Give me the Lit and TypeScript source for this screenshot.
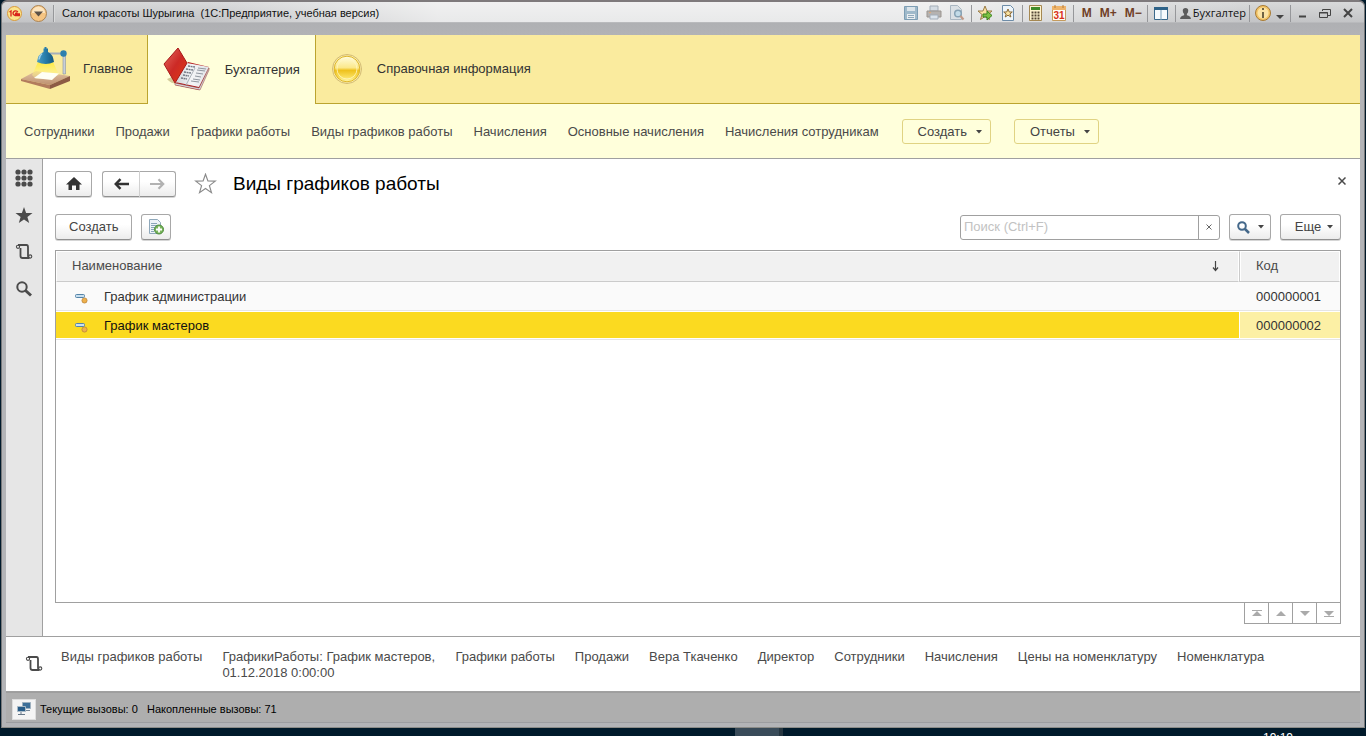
import { LitElement, html, css, svg, nothing } from "lit";
import { customElement, state } from "lit/decorators.js";

const lamp = html`<svg width="50" height="44" viewBox="0 0 50 44" aria-hidden="true">
  <defs>
    <linearGradient id="wood" x1="0" y1="0" x2="0" y2="1"><stop offset="0" stop-color="#e2c3a2"/><stop offset="1" stop-color="#bd9070"/></linearGradient>
    <linearGradient id="shade" x1="0" x2="1"><stop offset="0" stop-color="#4c9cc4"/><stop offset=".45" stop-color="#2a80ad"/><stop offset="1" stop-color="#12577f"/></linearGradient>
    <linearGradient id="beam" x1="0" y1="0" x2="0" y2="1"><stop offset="0" stop-color="#ffea3c"/><stop offset="1" stop-color="#fff6a0" stop-opacity=".3"/></linearGradient>
  </defs>
  <path d="M0 32 15 24 49 29 29 38z" fill="url(#wood)"/>
  <path d="M0 32 29 38v4L0 34z" fill="#b27c5d"/><path d="M29 38 49 29v5L29 42z" fill="#8d5b45"/>
  <path d="M42 9h2.500v18H42z" fill="#c9cfd8" stroke="#8a95a2" stroke-width=".6"/>
  <path d="M17 15h15l6 13-10 4H15l-4-4z" fill="url(#beam)"/>
  <path d="M13 31 21 25l17 1.500L31 33z" fill="#fffff4"/>
  <path d="M27 6.500h14" stroke="#a5afba" stroke-width="2"/>
  <circle cx="42.500" cy="6.500" r="3.200" fill="#2c7fae"/>
  <path d="M22.500 1.500h1V0h2v1.500h1.500V5q5 2 6 10-8 4-17 0 1-8 6.500-10z" fill="url(#shade)"/>
  <path d="M21 6.500q-2.500 2-3 6" stroke="#9fd2ea" stroke-width="1.500" fill="none"/>
</svg>`;

const book = html`<svg width="48" height="46" viewBox="0 0 48 46" aria-hidden="true">
  <defs>
    <linearGradient id="red" x1="0" y1="0" x2="1" y2="1"><stop offset="0" stop-color="#e46a60"/><stop offset=".5" stop-color="#cc2a26"/><stop offset="1" stop-color="#e13a12"/></linearGradient>
    <linearGradient id="paper" x1="0" x2="1"><stop offset="0" stop-color="#cfd3d8"/><stop offset=".5" stop-color="#f4f5f7"/><stop offset="1" stop-color="#dfe2e6"/></linearGradient>
  </defs>
  <path d="M4 32c3 4 7 4 8 5l-3-7z" fill="#b8a86c" opacity=".6"/>
  <path d="M12 38 25 15l21 5-10 23z" fill="#b41c1c"/>
  <path d="M12 35 24 16l22 4-10 20z" fill="url(#paper)"/>
  <path d="M12 36 36 41 46 21v2L37 43l-25-5z" fill="#d8dbe0" stroke="#8d3636" stroke-width=".5"/>
  <path d="m25 19 7 1m-9 2 7 1m-9 2 7 1m-8 2 6 1m-8 2 6 1" stroke="#737a84" stroke-width="1.500" stroke-dasharray="2 .6"/>
  <path d="m35 21 8 1m-9 1 8 1m-9 2 7 1m-8 2 6 1m-8 2 7 1m-9 1 8 1" stroke="#9197a0" stroke-width="1"/>
  <path d="m32 21-9 17" stroke="#aeb3ba"/>
  <path d="M15 1 24 16 12 36 1 17z" fill="url(#red)" stroke="#a81a1a"/>
</svg>`;

const coin = html`<svg width="32" height="32" viewBox="0 0 32 32" aria-hidden="true">
  <defs><linearGradient id="gold" x1="0" y1="0" x2="0" y2="1"><stop offset="0" stop-color="#fffde0"/><stop offset=".45" stop-color="#fbe88a"/><stop offset=".55" stop-color="#eec11c"/><stop offset=".8" stop-color="#f9dd58"/><stop offset="1" stop-color="#fdf6a8"/></linearGradient></defs>
  <circle cx="16" cy="16" r="14.500" fill="#f8eaa4" stroke="#d3bb74"/>
  <circle cx="16" cy="16" r="12.800" fill="url(#gold)" stroke="#dfb62c"/>
  <circle cx="16" cy="16" r="10" fill="none" stroke="#fff6c0" stroke-width=".8"/>
</svg>`;

const scroll = html`<svg width="18" height="18" viewBox="0 0 18 18" fill="none" stroke="#4b4b4b" stroke-width="1.800" aria-hidden="true">
  <path d="M3 2h8.500q1.500 0 1.500 2v8.500q0 2.500 1.500 2.500H7.500q-2 0-2-2V5"/><circle cx="3" cy="3.800" r="1.600" stroke-width="1.100"/><circle cx="15.200" cy="13.500" r="1.600" stroke-width="1.100"/>
</svg>`;

const starPath = "M9 1l2.100 5.900 6.400.1-5.100 3.900 1.800 6.100L9 13.400 3.800 17l1.800-6.100L.5 7l6.400-.1z";
const itemMark = html`<svg class="mark" width="13" height="11" viewBox="0 0 13 11" aria-hidden="true">
  <rect x=".5" y="1.500" width="9" height="3" rx="1" fill="#c8dfef" stroke="#5484a8"/><circle cx="9.500" cy="7.500" r="2.600" fill="#eeb04b" stroke="#b4803a" stroke-width=".7"/>
</svg>`;
const caret = html`<svg class="caret" width="6" height="4" viewBox="0 0 6 4" aria-hidden="true"><path d="M0 0h6L3 3.500z" fill="currentColor"/></svg>`;

const star16 = "M8 1l2 5h5l-4 3.500 1.500 5L8 11.500l-4.500 3 1.500-5L1 6h5z";
const glyphs = {
  save: svg`<path d="M1.500 1.500h13v13h-13z" fill="#9fb9ca" stroke="#7d9db3"/><path d="M4 2h8v4H4z" fill="#dbe4ea"/><path d="M4 9h8v5H4z" fill="#e9edf0"/><path d="M5 10.500h6M5 12.500h6" stroke="#8fa9bb"/>`,
  print: svg`<path d="M4 1h8v5H4z" fill="#d4dce4" stroke="#a3adb8"/><path d="M1 6h14v6H1z" fill="#b5b2b0" stroke="#9b9590"/><path d="M4 10h8v4H4z" fill="#dce4ec" stroke="#a3adb8"/><path d="M3 7.500h2" stroke="#e0aa7a"/>`,
  preview: svg`<path d="M1.500.5h7l4 4v10h-11z" fill="#dae0e5" stroke="#a9b6c1"/><circle cx="9" cy="8.500" r="3.300" fill="#c2dbe8" stroke="#86a2b5" stroke-width="1.500"/><path d="m11.500 11 3 3.500" stroke="#c19a87" stroke-width="2"/>`,
  addfav: svg`<path d="${star16}" fill="#fae2a0" stroke="#9a7b47"/><path d="M6 9h4V6l5 4.500-5 4.500v-3H6z" fill="#7cc142" stroke="#39811f"/>`,
  favs: svg`<path d="M2.500.5h8l3 3v12h-11z" fill="#edf4fa" stroke="#6d8ca8"/><path d="M8 4l1.300 3h3l-2.400 2 1 3L8 10.200 5.200 12l1-3-2.500-2h3z" fill="#fbe3a0" stroke="#8a6a38"/>`,
  calc: svg`<path d="M1.500.5h12v15h-12z" fill="#fff4cf" stroke="#a58852"/><path d="M3 2h9v3H3z" fill="#3f8b2a"/><path d="M3.500 7.500h9m-9 3h9m-9 3h9" stroke="#534534" stroke-width="2" stroke-dasharray="2 1"/>`,
  user: svg`<path d="M8 2a3 3 0 0 1 3 3q0 2-1.500 3.500v1.500q4 .5 4.500 4H2q.5-3.500 4.500-4V8.500Q5 7 5 5a3 3 0 0 1 3-3z" fill="#5c5c5c"/>`,
  columns: svg`<path d="M1.500 2.500h13v12h-13z" fill="#f5fafd" stroke="#3b6a8c"/><path d="M1 2h14v3H1z" fill="#2f6389"/><path d="M8 5v10" stroke="#7aa0ba"/>`,
  info: svg`<circle cx="8" cy="8" r="7.500" fill="#f2c467" stroke="#a77a35"/><circle cx="8" cy="8" r="5.500" fill="#fbe3a5"/><path d="M8 3v2m0 2v6" stroke="#6f6244" stroke-width="2"/>`,
};
const glyph = (g: unknown) => html`<svg width="16" height="16" viewBox="0 0 16 16" aria-hidden="true">${g}</svg>`;

@customElement("app-root")
export class AppRoot extends LitElement {
  @state() private selected = 1;
  @state() private query = "";

  private sections = [
    { name: "Главное", icon: lamp },
    { name: "Бухгалтерия", icon: book, active: true },
    { name: "Справочная информация", icon: coin },
  ];
  private commands = ["Сотрудники", "Продажи", "Графики работы", "Виды графиков работы", "Начисления", "Основные начисления", "Начисления сотрудникам"];
  private rows = [
    { name: "График администрации", code: "000000001" },
    { name: "График мастеров", code: "000000002" },
  ];
  private recent = ["Виды графиков работы", "ГрафикиРаботы: График мастеров, 01.12.2018 0:00:00", "Графики работы", "Продажи", "Вера Ткаченко", "Директор", "Сотрудники", "Начисления", "Цены на номенклатуру", "Номенклатура"];

  static styles = css`
    :host { display: flex; flex-direction: column; height: 100vh; background: #001a2b; color: #4a4a4a; font: 13px/16px "Liberation Sans", Arial, sans-serif; }
    * { box-sizing: border-box; }
    button { font: inherit; color: inherit; margin: 0; padding: 0; border: 0; background: none; display: inline-flex; align-items: center; justify-content: center; }
    a { color: inherit; text-decoration: none; }
    svg { display: block; flex: none; }
    .window { flex: 1; min-height: 0; display: flex; flex-direction: column; margin: 0 1px; padding: 0 4px 4px; border: 1px solid #77787a; border-top: 2px solid #7e7a7c; border-bottom-color: #8b8b87; border-radius: 6px 6px 0 0; background: #b3b4b7; }
    .titlebar { display: flex; align-items: center; height: 33px; padding: 0 5px 11px 0; margin: 0 -4px; background: linear-gradient(90deg, #ffffff00 15%, #ffffffa0 32%, #ffffffa0 68%, #ffffff00 92%) 0 0 / 100% 20px no-repeat, linear-gradient(#d8d9da 0, #c3c4c6 20px, #afb0b3 21px, #b2b3b6 33px); border-radius: 5px 5px 0 0; color: #111; font-size: 11px; white-space: pre; }
    .logo { width: 15px; height: 15px; margin-left: 5px; }
    .menu { margin: 0 6px 0 8px; }
    .sep { width: 1px; height: 17px; background: #96979a; box-shadow: 1px 0 #d9dadb; }
    .caption { flex: 1; margin: 0 0 0 8px; font: inherit; }
    .tools { display: flex; align-items: center; }
    .group { display: flex; align-items: center; gap: 7px; padding: 0 6px 0 5px; height: 17px; border-left: 1px solid #96979a; }
    .group.plain { border: 0; }
    .group.mem { gap: 8px; padding: 0 5px 0 8px; font-weight: bold; color: #704028; font-size: 12px; }
    .group.person { padding: 0 3px 0 4px; }
    .group.help { gap: 5px; }
    .group.controls { gap: 9px; padding: 0 4px 0 5px; }
    .user { gap: 2px; font: 11px/16px "Open Sans", sans-serif; }
    .client { flex: 1; min-height: 0; display: flex; flex-direction: column; background: #fff; }
    .sections { display: flex; height: 69px; background: #faeb9e; border-bottom: 1px solid #bba42f; color: #333; }
    .section { padding: 0 15px; gap: 14px; }
    .section:first-child { padding: 0 14px 0 15px; gap: 12px; }
    .section.active { background: #ffffdb; border: solid #bba42f; border-width: 0 1px; margin-bottom: -1px; }
    .commands { display: flex; align-items: center; gap: 21px; height: 55px; padding: 1px 18px 0; background: #ffffdb; border-bottom: 1px solid #a0a0a0; white-space: nowrap; }
    .drop { height: 25px; margin-left: 2px; padding: 0 8px 0 15px; gap: 9px; border: 1px solid #e0d383; border-radius: 3px; color: #444; }
    .workspace { flex: 1; min-height: 0; display: flex; }
    .rail { width: 37px; display: flex; flex-direction: column; align-items: center; gap: 19px; padding-top: 10px; background: #e6e6e6; border-right: 1px solid #a0a0a0; }
    .rail button { width: 18px; height: 18px; }
    .page { flex: 1; min-width: 0; display: flex; flex-direction: column; padding: 11px 19px 12px 12px; }
    .heading { display: flex; align-items: center; height: 27px; }
    h1 { flex: 1; margin: 0 0 0 16px; font-size: 19px; line-height: 24px; font-weight: normal; color: #000; }
    .btn { height: 26px; border: 1px solid #a8a8a8; border-bottom-color: #909090; border-radius: 3px; background: linear-gradient(#fff 40%, #ececec); box-shadow: 0 1px #d5d5d5; color: #444; }
    .home { width: 37px; margin-right: 10px; }
    .nav { display: flex; margin-right: 18px; }
    .nav .btn { width: 37px; }
    .nav .btn:first-child { border-radius: 3px 0 0 3px; border-right: 0; }
    .nav .btn:last-child { border-radius: 0 3px 3px 0; border-left-color: #d0d0d0; }
    .close { width: 10px; height: 10px; margin: 0 -6px 6px 0; }
    .toolbar { display: flex; align-items: center; margin: 17px 0 10px; gap: 9px; }
    .create { padding: 0 13px; }
    .copy { width: 30px; }
    .search { display: flex; width: 260px; height: 25px; margin-left: auto; border: 1px solid #a0a0a0; border-radius: 3px; }
    .search input { flex: 1; min-width: 0; padding: 0 3px; border: 0; outline: 0; background: none; font: inherit; color: #333; }
    .search input::placeholder { color: #c2c2c2; opacity: 1; }
    .search button { width: 21px; border-left: 1px solid #a0a0a0; }
    .find { width: 42px; gap: 8px; }
    .more { width: 61px; gap: 6px; padding-left: 7px; }
    .list { flex: 1; min-height: 0; border: 1px solid #a0a0a0; }
    table { width: 100%; table-layout: fixed; border-collapse: separate; border-spacing: 0; }
    .code { width: 101px; }
    th { height: 31px; padding: 0 15px 2px; text-align: left; font-weight: normal; background: #f1f1f1; border: 1px solid #fff; border-bottom: 1px solid #cbcbcb; }
    th + th { padding-left: 16px; border-left: 1px solid #cbcbcb; box-shadow: inset 1px 0 #fff; }
    .sort { display: flex; justify-content: space-between; width: 100%; text-align: left; }
    .sort svg { margin-right: 4px; }
    td { height: 29px; padding: 1px 16px 0; color: #333; background: #fafafa; border-bottom: 1px solid #e5e5e5; }
    td + td { padding-left: 17px; }
    .name { display: flex; align-items: center; gap: 16px; }
    .mark { margin: 3px 0 0 3px; }
    .picked td { background: #fbda20; box-shadow: inset 0 1px #fff, inset 0 -1px #fff; color: #111; }
    .picked td + td { background: #fcf0a5; box-shadow: inset 1px 1px #fff, inset 0 -1px #fff; color: #333; }
    .pager { display: flex; align-self: flex-end; border: solid #a0a0a0; border-width: 0 1px 1px 0; }
    .pager button { width: 24px; height: 20px; border-left: 1px solid #a0a0a0; color: #aaa; }
    .recent { display: flex; gap: 20px; height: 56px; padding: 12px 18px 0; border-top: 1px solid #a0a0a0; border-bottom: 1px solid #a0a0a0; white-space: nowrap; }
    .recent .tape { width: 19px; height: 30px; margin-right: -2px; }
    .recent a { max-width: 213px; white-space: normal; flex: none; }
    .status { display: flex; align-items: center; height: 31px; padding: 3px 6px 0; gap: 4px; background: #aeaeae; border-top: 1px solid #9e9e9e; border-bottom: 1px solid #9c9da0; color: #000; font-size: 11px; white-space: pre; }
    .net { width: 24px; height: 21px; background: #f4f4f4; border: 1px solid #ddd; }
    .taskbar { display: flex; height: 8px; overflow: hidden; color: #fff; font-size: 12px; line-height: 20px; }
    .running { width: 48px; margin-left: 735px; background: #394b59; border-right: 4px solid #263640; }
    .clock { margin: 0 73px 0 auto; }
  `;

  render() {
    return html`
      <div class="window">
        <header class="titlebar">
          <svg class="logo" viewBox="0 0 15 15" aria-hidden="true"><circle cx="7.500" cy="7.500" r="7" fill="#fbe48c" stroke="#d89a3c"/><path d="M2.500 6 4 5v5.500M11 5.800Q8 4 6.500 6T8 9.500h5M10.500 7.200Q8.500 6.500 8.500 8h4.500" fill="none" stroke="#d9231c" stroke-width="1.300"/></svg>
          <button class="menu" aria-label="Главное меню"><svg width="17" height="17" viewBox="0 0 17 17"><circle cx="8.500" cy="8.500" r="8" fill="#f6c583" stroke="#a98355"/><path d="M2 8a6.500 6.500 0 0 1 13 0z" fill="#fde4bd"/><path d="M4 6.500h9l-4.500 5z" fill="#5c5147"/></svg></button>
          <span class="sep"></span>
          <h2 class="caption">Салон красоты Шурыгина  (1С:Предприятие, учебная версия)</h2>
          <div class="tools">
            <div class="group plain">
              <button aria-label="Сохранить" disabled>${glyph(glyphs.save)}</button>
              <button aria-label="Печать" disabled>${glyph(glyphs.print)}</button>
              <button aria-label="Просмотр" disabled>${glyph(glyphs.preview)}</button>
            </div>
            <div class="group">
              <button aria-label="Добавить в избранное">${glyph(glyphs.addfav)}</button>
              <button aria-label="Избранное">${glyph(glyphs.favs)}</button>
            </div>
            <div class="group">
              <button aria-label="Калькулятор">${glyph(glyphs.calc)}</button>
              <button aria-label="Календарь"><svg width="16" height="16" viewBox="0 0 16 16"><path d="M1.500 1.500h13v14h-13z" fill="#fffdf4" stroke="#c49b5d"/><path d="M1 1h14v4H1z" fill="#eeb36a"/><path d="M4 0v3m8-3v3" stroke="#b57a36"/><text x="8" y="14" text-anchor="middle" font-size="10" font-weight="bold" fill="#d9301c">31</text></svg></button>
            </div>
            <div class="group mem"><button>M</button><button>M+</button><button>M−</button></div>
            <div class="group"><button aria-label="Панели">${glyph(glyphs.columns)}</button></div>
            <div class="group person"><button class="user"><svg width="11" height="11" viewBox="2 2 12 12" aria-hidden="true">${glyphs.user}</svg>Бухгалтер</button></div>
            <div class="group help">
              <button aria-label="О программе">${glyph(glyphs.info)}</button>
              <button aria-label="Параметры"><svg width="8" height="16" viewBox="0 0 8 16"><path d="M0 10h8l-4 4z" fill="#444"/></svg></button>
            </div>
            <div class="group controls">
              <button aria-label="Свернуть"><svg width="13" height="14" viewBox="0 0 13 14"><path d="M3 10.500h7" stroke="#444" stroke-width="2"/></svg></button>
              <button aria-label="Развернуть"><svg width="14" height="14" viewBox="0 0 14 14" fill="none" stroke="#444"><path d="M4.500 5V3.500h8v6H10"/><path d="M1.500 6.500h8v5h-8zM1 7h9"/></svg></button>
              <button aria-label="Закрыть"><svg width="14" height="14" viewBox="0 0 14 14"><path d="m3 3 8 8m0-8-8 8" stroke="#444" stroke-width="2"/></svg></button>
            </div>
          </div>
        </header>

        <div class="client">
          <nav class="sections">
            ${this.sections.map((s) => html`<button class="section ${s.active ? "active" : ""}">${s.icon}<span>${s.name}</span></button>`)}
          </nav>
          <nav class="commands">
            ${this.commands.map((c) => html`<a href="#">${c}</a>`)}
            <button class="drop">Создать ${caret}</button>
            <button class="drop">Отчеты ${caret}</button>
          </nav>

          <div class="workspace">
            <aside class="rail">
              <button aria-label="Меню функций"><svg width="18" height="18" viewBox="0 0 18 18" fill="#4b4b4b">${[3, 9, 15].map((y) => [3, 9, 15].map((x) => svg`<circle cx=${x} cy=${y} r="2.600"/>`))}</svg></button>
              <button aria-label="Избранное"><svg width="18" height="18" viewBox="0 0 18 18"><path d=${starPath} fill="#4b4b4b"/></svg></button>
              <button aria-label="История">${scroll}</button>
              <button aria-label="Поиск"><svg width="18" height="18" viewBox="0 0 18 18" fill="none" stroke="#4b4b4b"><circle cx="7" cy="7" r="4.700" stroke-width="2"/><path d="m10.500 10.500 5.500 5" stroke-width="3"/></svg></button>
            </aside>

            <main class="page">
              <div class="heading">
                <button class="btn home" aria-label="Начальная страница"><svg width="16" height="14" viewBox="0 0 16 14"><path d="M8 0l8 7.500h-2.500V13H10V8.500H6V13H2.500V7.500H0z" fill="#333"/></svg></button>
                <div class="nav">
                  <button class="btn" aria-label="Назад"><svg width="15" height="12" viewBox="0 0 15 12"><path d="M3 6h12" stroke="#333" stroke-width="2.500"/><path d="M6.500 1.200 1.800 6l4.700 4.800" fill="none" stroke="#333" stroke-width="2.500"/></svg></button>
                  <button class="btn" aria-label="Вперед"><svg width="15" height="12" viewBox="0 0 15 12"><path d="M0 6h12M8.500 1.200 13.200 6l-4.700 4.800" fill="none" stroke="#b2b2b2" stroke-width="2.200"/></svg></button>
                </div>
                <button aria-label="В избранное"><svg width="23" height="22" viewBox="-1 0 20 19"><path d=${starPath} fill="#fff" stroke="#8a8a8a" stroke-width="1"/></svg></button>
                <h1>Виды графиков работы</h1>
                <button class="close" aria-label="Закрыть"><svg width="8" height="8" viewBox="0 0 8 8"><path d="m.5.5 7 7m0-7-7 7" stroke="#4a4a4a" stroke-width="1.500"/></svg></button>
              </div>

              <div class="toolbar">
                <button class="btn create">Создать</button>
                <button class="btn copy" aria-label="Скопировать"><svg width="16" height="16" viewBox="0 0 16 16"><path d="M1.500.5h8l3 3v11h-11z" fill="#eef4f8" stroke="#8fa8ba"/><path d="M3 4.500h6m-6 2h7m-7 2h4m-4 2h3m-3 2h3" stroke="#8aa6b9"/><circle cx="11" cy="10.500" r="4.500" fill="#79b45b" stroke="#4c8c3a"/><path d="M11 7.500v6m-3-3h6" stroke="#fff" stroke-width="1.800"/></svg></button>
                <div class="search">
                  <input type="text" aria-label="Поиск" placeholder="Поиск (Ctrl+F)" .value=${this.query} @input=${(e: Event) => (this.query = (e.target as HTMLInputElement).value)}>
                  <button aria-label="Очистить" @click=${() => (this.query = "")}><svg width="6" height="6" viewBox="0 0 6 6"><path d="m.5.5 5 5m0-5-5 5" stroke="#666"/></svg></button>
                </div>
                <button class="btn find" aria-label="Найти"><svg width="13" height="13" viewBox="0 0 13 13" fill="none" stroke="#44688a"><circle cx="5" cy="5" r="3.800" stroke-width="2"/><path d="m8 8 4 4" stroke-width="2.500"/></svg>${caret}</button>
                <button class="btn more">Еще ${caret}</button>
              </div>

              <div class="list">
                <table>
                  <colgroup><col><col class="code"></colgroup>
                  <thead><tr>
                    <th><button class="sort">Наименование<svg width="7" height="12" viewBox="0 0 7 12"><path d="M3.500 1v9M1 7.500l2.500 3 2.500-3" fill="none" stroke="#444" stroke-width="1.200"/></svg></button></th>
                    <th>Код</th>
                  </tr></thead>
                  <tbody>
                    ${this.rows.map((r, i) => html`<tr class=${i === this.selected ? "picked" : nothing} @click=${() => (this.selected = i)}>
                      <td><div class="name">${itemMark}<span>${r.name}</span></div></td><td>${r.code}</td></tr>`)}
                  </tbody>
                </table>
              </div>
              <div class="pager">
                <button aria-label="В начало"><svg width="10" height="7" viewBox="0 0 10 7" fill="currentColor"><path d="M0 0h10v1H0zM5 1l5 5H0z"/></svg></button>
                <button aria-label="Вверх"><svg width="10" height="5" viewBox="0 0 10 5" fill="currentColor"><path d="M5 0l5 5H0z"/></svg></button>
                <button aria-label="Вниз"><svg width="10" height="5" viewBox="0 0 10 5" fill="currentColor"><path d="M5 5l5-5H0z"/></svg></button>
                <button aria-label="В конец"><svg width="10" height="7" viewBox="0 0 10 7" fill="currentColor"><path d="M0 6h10v1H0zM5 6l5-5H0z"/></svg></button>
              </div>
            </main>
          </div>

          <nav class="recent">
            <button class="tape" aria-label="История">${scroll}</button>
            ${this.recent.map((r) => html`<a href="#">${r}</a>`)}
          </nav>
        </div>

        <footer class="status">
          <button class="net" aria-label="Показатели производительности"><svg width="16" height="14" viewBox="0 0 16 14"><path d="M6.500.5h8v6h-8z" fill="#3d6f98" stroke="#9eb0be"/><path d="M9 8.500h5" stroke="#789"/><path d="M1.500 4.500h8v5h-8z" fill="#285c88" stroke="#a9bac6"/><path d="M5 10v2m-3 .5h7" stroke="#678"/></svg></button>
          <span>Текущие вызовы: 0   Накопленные вызовы: 71</span>
        </footer>
      </div>
      <div class="taskbar"><span class="running"></span><span class="clock">19:19</span></div>
    `;
  }
}
